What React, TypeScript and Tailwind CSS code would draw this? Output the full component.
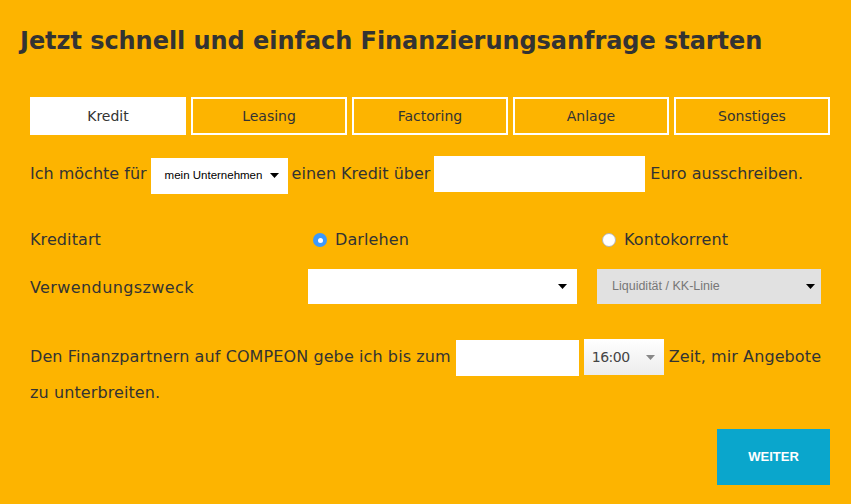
import React from 'react';

const tabs = ['Kredit', 'Leasing', 'Factoring', 'Anlage', 'Sonstiges'];

function Caret({ className = '' }: { className?: string }) {
  return (
    <svg width="9" height="5" viewBox="0 0 9 5" className={className}>
      <path d="M0 0 L9 0 L4.5 5 Z" fill="currentColor" />
    </svg>
  );
}

function Radio({ checked }: { checked?: boolean }) {
  return checked ? (
    <span className="w-[14px] h-[14px] rounded-full bg-[#3b99fc] flex items-center justify-center">
      <span className="w-[5px] h-[5px] rounded-full bg-white" />
    </span>
  ) : (
    <span className="w-[14px] h-[14px] rounded-full bg-white border border-[#b5b5b5]" />
  );
}

export default function App() {
  return (
    <div
      className="w-[851px] h-[504px] bg-[#fdb400] text-[#333] overflow-hidden"
      style={{ fontFamily: '"DejaVu Sans", Verdana, sans-serif' }}
    >
      <h1 className="pl-[20px] pt-[26px] text-[24px] font-bold leading-[30px] text-[#333] tracking-[-0.05px]">
        Jetzt schnell und einfach Finanzierungsanfrage starten
      </h1>

      <div className="pl-[30px] pr-[21px]">
        {/* Tabs */}
        <div className="mt-[41px] flex gap-[5px]">
          {tabs.map((t, i) => (
            <div
              key={t}
              className={`w-[156px] h-[38px] flex items-center justify-center text-[14px] border-2 border-white ${
                i === 0 ? 'bg-white' : ''
              }`}
            >
              {t}
            </div>
          ))}
        </div>

        {/* Amount row */}
        <div className="mt-[20px] flex items-center text-[16px] h-[38px]">
          <span>Ich möchte für</span>
          <div
            className="ml-[4px] w-[137px] h-[36px] mt-[3px] bg-white flex items-center justify-between pl-[14px] pr-[9px] text-[11.5px] text-black"
            style={{ fontFamily: '"Liberation Sans", Arial, sans-serif' }}
          >
            <span>mein Unternehmen</span>
            <Caret />
          </div>
          <span className="ml-[4px]">einen Kredit über</span>
          <div className="ml-[4px] w-[211px] h-[36px] bg-white" />
          <span className="ml-[5px]">Euro ausschreiben.</span>
        </div>

        {/* Kreditart */}
        <div className="mt-[36px] flex items-center text-[16px] tracking-[0.1px] h-[22px]">
          <span className="w-[283px]">Kreditart</span>
          <span className="flex items-center gap-[8px] w-[289px]">
            <Radio checked />
            Darlehen
          </span>
          <span className="flex items-center gap-[8px]">
            <Radio />
            Kontokorrent
          </span>
        </div>

        {/* Verwendungszweck */}
        <div className="mt-[17px] flex items-center text-[16px] h-[36px]">
          <span className="w-[278px] tracking-[0.4px] pt-[3px]">Verwendungszweck</span>
          <div className="w-[269px] h-[35px] bg-white flex items-center justify-end pr-[10px] text-black">
            <Caret />
          </div>
          <div
            className="ml-[20px] w-[224px] h-[35px] bg-[#e1e1e1] flex items-center justify-between pl-[15px] pr-[6px] text-[12.5px] text-[#777]"
            style={{ fontFamily: '"Liberation Sans", Arial, sans-serif' }}
          >
            <span>Liquidität / KK-Linie</span>
            <Caret className="text-black" />
          </div>
        </div>

        {/* Deadline */}
        <div className="mt-[34px] text-[16px] tracking-[0.1px] leading-[36px]">
          <div className="flex items-center h-[38px]">
            <span>Den Finanzpartnern auf COMPEON gebe ich bis zum</span>
            <div className="ml-[5px] w-[123px] h-[36px] mt-[1px] bg-white" />
            <div className="ml-[5px] w-[80px] h-[36px] bg-gradient-to-b from-white to-[#ececec] flex items-center justify-between pl-[8px] pr-[9px] text-[14px] text-[#444]">
              <span className="tracking-[-0.5px]">16:00</span>
              <Caret className="text-[#888]" />
            </div>
            <span className="ml-[5px]">Zeit, mir Angebote</span>
          </div>
          <div className="leading-[18px] mt-[8px]">zu unterbreiten.</div>
        </div>

        <div className="mt-[27px] flex justify-end">
          <button
            className="w-[113px] h-[56px] bg-[#0aa6cc] text-white text-[13px] font-bold"
            style={{ fontFamily: '"Liberation Sans", Arial, sans-serif' }}
          >
            WEITER
          </button>
        </div>
      </div>
    </div>
  );
}
